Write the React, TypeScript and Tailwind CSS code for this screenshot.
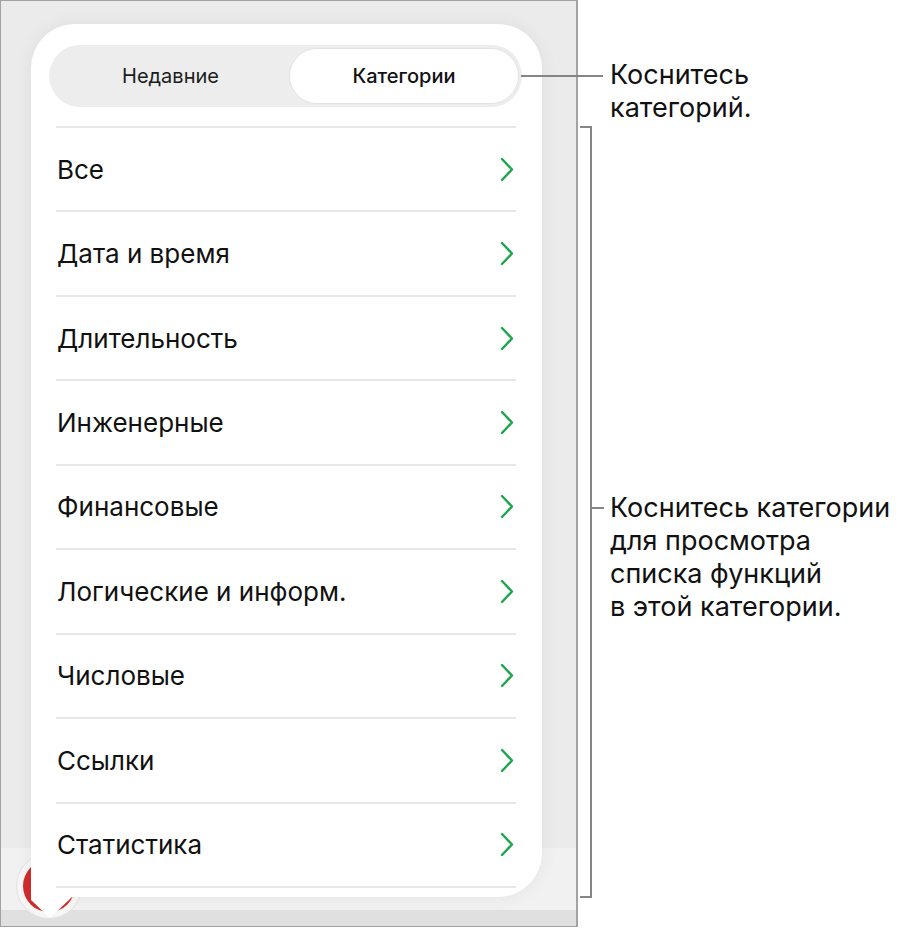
const categories = [
  'Все',
  'Дата и время',
  'Длительность',
  'Инженерные',
  'Финансовые',
  'Логические и информ.',
  'Числовые',
  'Ссылки',
  'Статистика',
]

function Chevron() {
  return (
    <svg width="14" height="25" viewBox="0 0 14 25" fill="none" className="shrink-0">
      <path
        d="M2 2 L12 12.5 L2 23"
        stroke="#1ba64c"
        strokeWidth="2.4"
        strokeLinecap="round"
        strokeLinejoin="round"
      />
    </svg>
  )
}

function Segmented() {
  return (
    <div className="ml-[18px] mr-[20px] h-[62px] rounded-full bg-[#ededed] p-[3px] flex items-stretch">
      <button className="flex-1 flex items-center justify-center text-[20px] text-[#1c1c1c]">
        Недавние
      </button>
      <button className="w-[230px] flex items-center justify-center rounded-full bg-white border border-[#e2e2e2] text-[20px] font-medium text-[#111]">
        Категории
      </button>
    </div>
  )
}

function CategoryList() {
  return (
    <ul className="mt-[19px] px-[25px] pr-[26px]">
      {categories.map((name) => (
        <li
          key={name}
          className="h-[84.45px] border-t-2 border-[#e7e7e7] flex items-center justify-between pl-px pr-[2px]"
        >
          <span className="text-[26px] text-[#111]">{name}</span>
          <Chevron />
        </li>
      ))}
      <li className="h-[20px] border-t-2 border-[#e7e7e7]" />
    </ul>
  )
}

export default function App() {
  return (
    <div
      className="relative w-[902px] h-[928px] bg-white flex"
      style={{ fontFamily: 'Inter, "Noto Sans", sans-serif' }}
    >
      {/* device frame */}
      <div className="relative w-[578px] h-[927px] border border-r-2 border-[#a2a2a2] bg-[#ebebeb] overflow-hidden shrink-0">
        {/* bottom toolbar behind the popover */}
        <div className="absolute left-0 right-0 top-[847px] bottom-0 flex flex-col">
          <div className="h-[62px] bg-[#f1f1f1]" />
          <div className="flex-1 bg-[#e0e0e0]" />
        </div>

        {/* record button peeking out */}
        <div className="absolute left-[15px] top-[852px] w-[66px] h-[66px] rounded-full bg-[#f6f6f6] border border-[#e2e2e2] flex items-center justify-center">
          <div className="w-[52px] h-[52px] rounded-full bg-[#d12c2c]" />
        </div>

        {/* popover */}
        <div className="absolute left-[30px] top-[23px] w-[511px] h-[873px] bg-white rounded-[44px] rounded-bl-none overflow-hidden pt-[21px] shadow-[0_0_18px_rgba(0,0,0,0.06)]">
          <Segmented />
          <CategoryList />
        </div>
        <svg className="absolute left-[30px] top-[895px]" width="44" height="24" viewBox="0 0 44 24">
          <path d="M0 0 L0 4 L19 22 L41 1 L41 0 Z" fill="#ffffff" />
        </svg>
      </div>

      {/* callouts */}
      <div className="pl-[32px] pt-[58px] text-[27px] leading-[33px] text-[#111]">
        <p>
          Коснитесь
          <br />
          категорий.
        </p>
        <p className="mt-[367px]">
          Коснитесь категории
          <br />
          для просмотра
          <br />
          списка функций
          <br />в этой категории.
        </p>
      </div>

      {/* leader lines */}
      <div className="absolute left-[521px] top-[75px] w-[82px] h-[2px] bg-[#858585]" />
      <div className="absolute left-[580px] top-[126px] w-[12px] h-[772px] border-t-2 border-b-2 border-r-2 border-[#858585]" />
      <div className="absolute left-[592px] top-[507px] w-[12px] h-[2px] bg-[#858585]" />
    </div>
  )
}
